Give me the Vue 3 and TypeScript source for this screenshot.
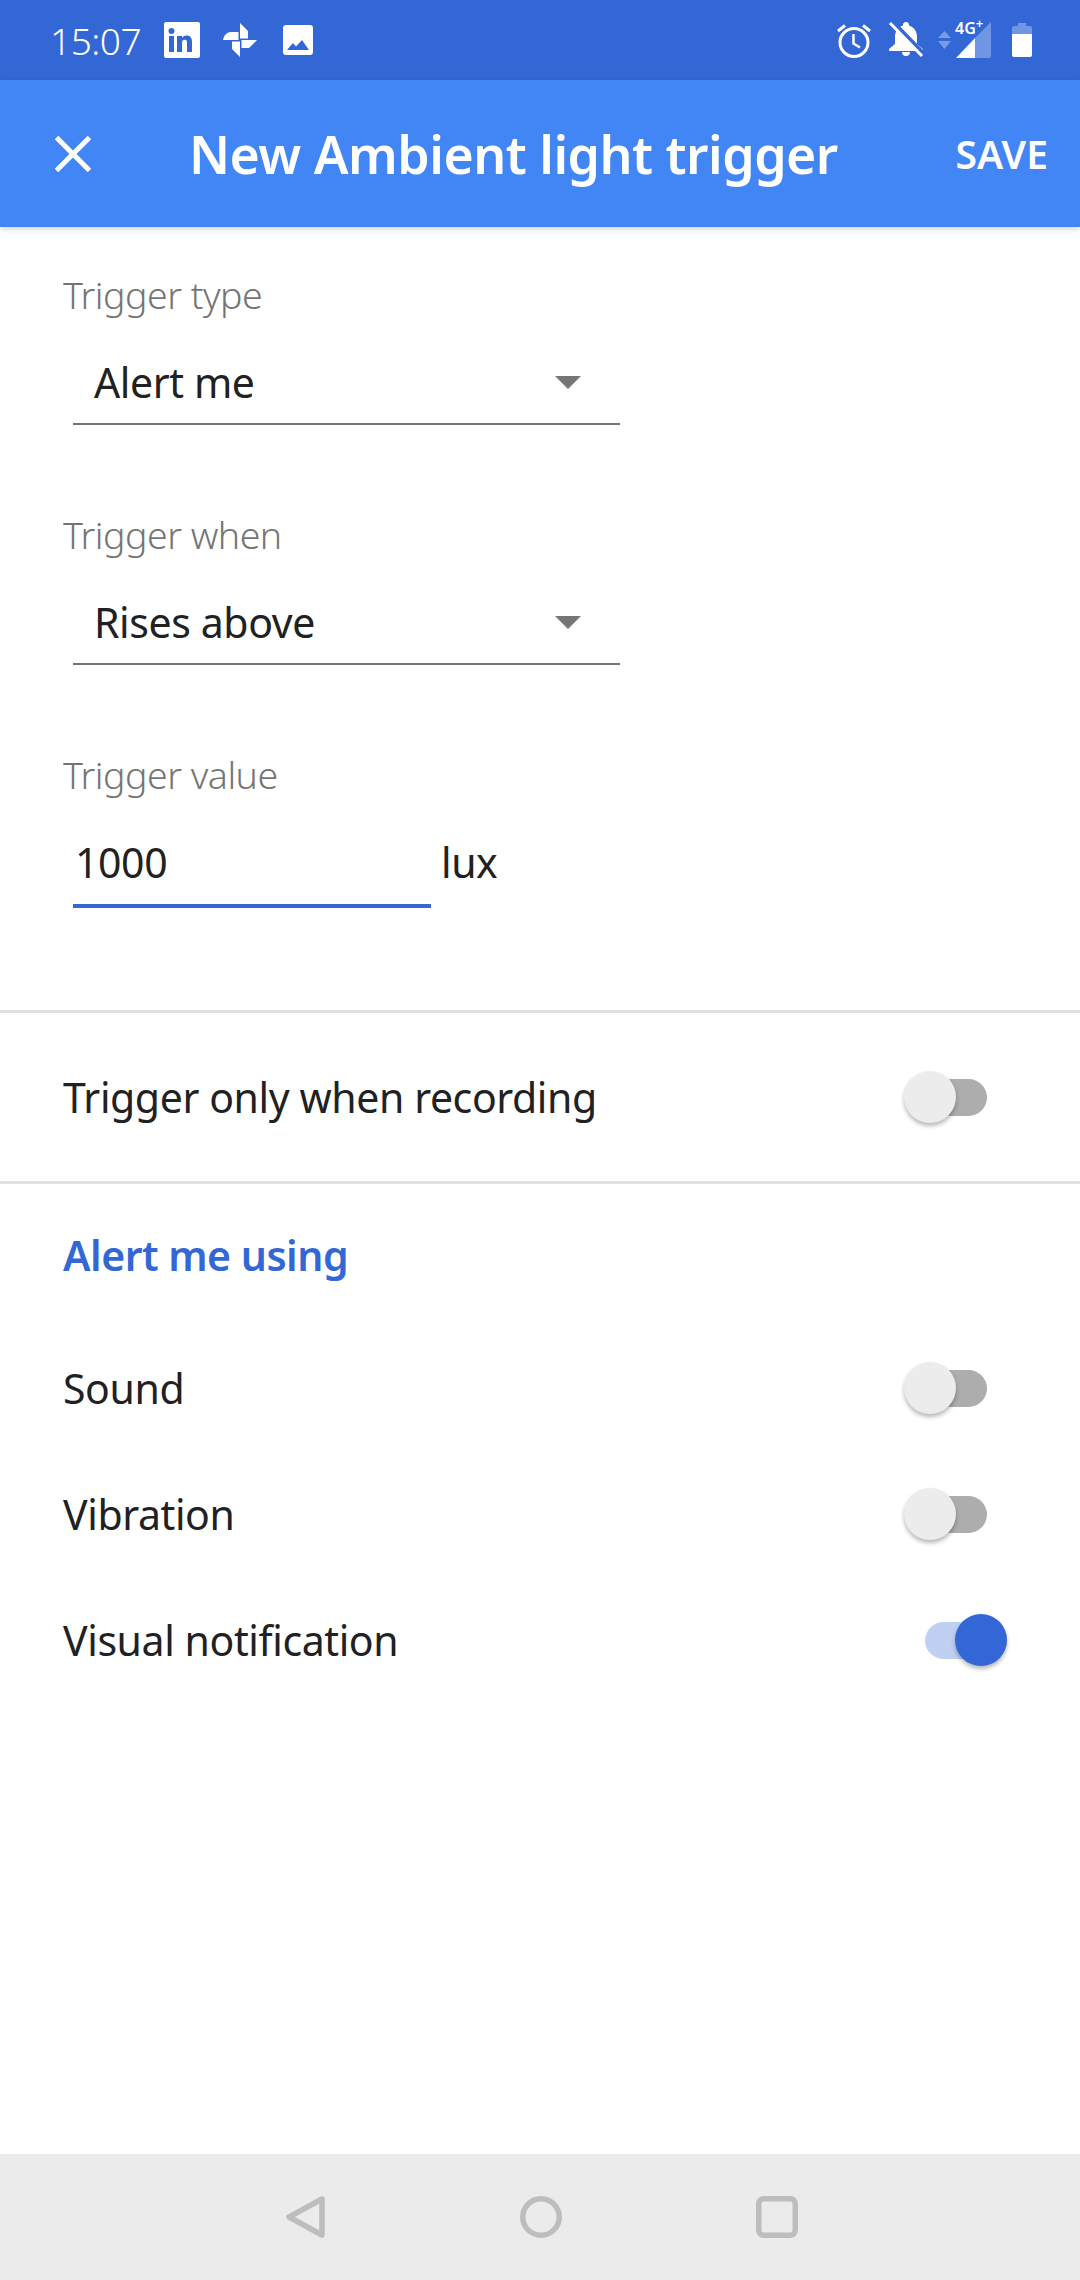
<script setup lang="ts">
import { ref } from 'vue';

const triggerOnlyRecording = ref(false);

const alertRows = ref([
  { label: 'Sound', on: false },
  { label: 'Vibration', on: false },
  { label: 'Visual notification', on: true },
]);

const selects = [
  { label: 'Trigger type', value: 'Alert me' },
  { label: 'Trigger when', value: 'Rises above' },
];
</script>

<template>
  <div class="screen">
    <div class="status-bar">
      <span class="clock">15:07</span>
      <svg class="linkedin" width="36" height="36" viewBox="0 0 36 36">
        <path fill="#fff" fill-rule="evenodd" d="M2 0h32a2 2 0 0 1 2 2v32a2 2 0 0 1-2 2H2a2 2 0 0 1-2-2V2a2 2 0 0 1 2-2zM5 14v16h5V14zM7.500 6a3 3 0 1 0 0 6 3 3 0 0 0 0-6zM13 14v16h5v-9c0-2 1-3.200 2.800-3.200S23 19 23 21v9h5V20c0-4.500-2.200-6.400-5.500-6.400-2.200 0-3.700 1-4.500 2.300V14z" />
      </svg>
      <svg class="pinwheel" width="34" height="34" viewBox="0 0 34 34">
        <path fill="#fff" d="M17 0l8 8v7.500h-8zM34 17l-8 8h-7.500v-8zM17 34l-8-8v-7.500h8zM0 17c1-5 4-8 8-8h7.500v8z" />
      </svg>
      <svg class="picture" width="30" height="30" viewBox="0 0 30 30">
        <path fill="#fff" fill-rule="evenodd" d="M3 0h24a3 3 0 0 1 3 3v24a3 3 0 0 1-3 3H3a3 3 0 0 1-3-3V3a3 3 0 0 1 3-3zM4 25l6-7 3 3.500L19 15l7 10z" />
      </svg>
      <span class="status-spacer"></span>
      <svg class="alarm" width="34" height="36" viewBox="0 0 34 36">
        <circle cx="17" cy="20.500" r="14" fill="none" stroke="#fff" stroke-width="3" />
        <path d="M16.500 12v9.500l6.500 4" fill="none" stroke="#fff" stroke-width="2.500" />
        <path d="M1 9l7-5.500M33 9l-7-5.500" fill="none" stroke="#fff" stroke-width="3" />
      </svg>
      <svg class="bell" width="36" height="36" viewBox="0 0 36 36">
        <path fill="#fff" d="M18 0a3 3 0 0 1 3 3.500c5 1.500 8 6 8 11.500v7l6 5v2H1v-2l6-5v-7c0-5.500 3-10 8-11.500a3 3 0 0 1 3-3.500zM14 30h8a4 4 0 0 1-8 0z" />
        <path d="M5 0l32 33" stroke="#3367d6" stroke-width="4" />
        <path d="M2 1l32 33" stroke="#fff" stroke-width="3" />
      </svg>
      <svg class="data-arrows" width="13" height="18" viewBox="0 0 13 18">
        <path fill="#fff" opacity="0.35" d="M6.500 0L13 7H0zM0 10h13l-6.500 8z" />
      </svg>
      <div class="signal">
        <svg width="36" height="36" viewBox="0 0 36 36">
          <path fill="#fff" opacity="0.3" d="M35 0v34a2 2 0 0 1-2 2H19V16z" />
          <path fill="#fff" d="M19 16v20H0z" />
        </svg>
        <span class="network">4G<sup>+</sup></span>
      </div>
      <svg class="battery" width="20" height="34" viewBox="0 0 20 34">
        <path fill="#fff" opacity="0.3" d="M6 0h8v3h4a2 2 0 0 1 2 2v6H0V5a2 2 0 0 1 2-2h4z" />
        <path fill="#fff" d="M0 11h20v21a2 2 0 0 1-2 2H2a2 2 0 0 1-2-2z" />
      </svg>
    </div>

    <header class="app-bar">
      <svg class="close" width="36" height="36" viewBox="0 0 36 36">
        <path d="M1.500 1.500l33 33M34.500 1.500l-33 33" stroke="#fff" stroke-width="5" />
      </svg>
      <h1 class="title">New Ambient light trigger</h1>
      <span class="save">SAVE</span>
    </header>

    <section class="form">
      <div v-for="item in selects" :key="item.label" class="field">
        <div class="field-label">{{ item.label }}</div>
        <div class="select">
          <span class="select-value">{{ item.value }}</span>
          <span class="caret"></span>
        </div>
      </div>
      <div class="field">
        <div class="field-label">Trigger value</div>
        <div class="value-row">
          <div class="value-input">1000</div>
          <span class="unit">lux</span>
        </div>
      </div>
    </section>

    <div class="row recording-row">
      <span>Trigger only when recording</span>
      <div class="switch" :class="{ on: triggerOnlyRecording }">
        <span class="thumb"></span>
      </div>
    </div>

    <section class="alerts">
      <h2 class="alerts-title">Alert me using</h2>
      <div v-for="row in alertRows" :key="row.label" class="row">
        <span>{{ row.label }}</span>
        <div class="switch" :class="{ on: row.on }">
          <span class="thumb"></span>
        </div>
      </div>
    </section>

    <nav class="nav-bar">
      <svg width="40" height="42" viewBox="0 0 40 42">
        <path d="M36 3L3 21l33 18z" fill="none" stroke="#bdbdbd" stroke-width="5.500" stroke-linejoin="round" />
      </svg>
      <svg width="42" height="42" viewBox="0 0 42 42">
        <circle cx="21" cy="21" r="18.250" fill="none" stroke="#bdbdbd" stroke-width="5.500" />
      </svg>
      <svg width="42" height="42" viewBox="0 0 42 42">
        <rect x="2.750" y="2.750" width="36.500" height="36.500" rx="5" fill="none" stroke="#bdbdbd" stroke-width="5.500" />
      </svg>
    </nav>
  </div>
</template>

<style>
html,
body {
  margin: 0;
  background: #fff;
}
</style>

<style scoped>
.screen {
  display: flex;
  flex-direction: column;
  width: 1080px;
  height: 2280px;
  overflow: hidden;
  background: #fff;
  font-family: "Noto Sans", "Open Sans", sans-serif;
  color: #212121;
}

.status-bar {
  display: flex;
  align-items: center;
  flex: none;
  height: 80px;
  padding: 0 48px 0 50px;
  box-sizing: border-box;
  background: #3367d6;
  color: #fff;
}

.clock {
  width: 114px;
  font-size: 37px;
  font-weight: 300;
  letter-spacing: -0.5px;
}

.linkedin {
  margin-right: 23px;
}

.pinwheel {
  margin-right: 26px;
}

.status-spacer {
  flex: 1;
}

.alarm {
  margin-right: 17px;
}

.bell {
  margin-right: 14px;
}

.data-arrows {
  margin-right: 5px;
}

.signal {
  position: relative;
  width: 36px;
  height: 36px;
  margin-right: 20px;
}

.signal svg {
  display: block;
}

.network {
  position: absolute;
  top: -4px;
  left: -1px;
  font-size: 16px;
  font-weight: 600;
  line-height: 20px;
  white-space: nowrap;
}

.network sup {
  font-size: 13px;
  line-height: 0;
}

.app-bar {
  position: relative;
  z-index: 1;
  display: flex;
  align-items: center;
  flex: none;
  height: 147px;
  padding: 0 32px 0 55px;
  box-sizing: border-box;
  background: #4285f4;
  color: #fff;
  box-shadow: 0 2px 6px rgba(0, 0, 0, 0.18);
}

.close {
  margin-right: 98px;
}

.title {
  flex: 1;
  margin: 0;
  font-size: 51.800px;
  font-weight: 600;
  letter-spacing: -0.5px;
  white-space: nowrap;
}

.save {
  font-size: 39px;
  font-weight: 600;
}

.form {
  flex: none;
  padding: 45px 0 0 63px;
  height: 786px;
  box-sizing: border-box;
  border-bottom: 3px solid #e0e0e0;
}

.field {
  margin-bottom: 87px;
}

.field-label {
  margin-bottom: 2px;
  font-size: 37.500px;
  font-weight: 300;
  line-height: 46px;
  color: #757575;
  letter-spacing: -0.5px;
}

.select {
  display: flex;
  align-items: center;
  justify-content: space-between;
  width: 547px;
  height: 105px;
  margin-left: 10px;
  padding: 20px 39px 0 21px;
  box-sizing: border-box;
  border-bottom: 2px solid #757575;
}

.select-value,
.value-input,
.unit {
  font-size: 41px;
  letter-spacing: -0.4px;
}

.caret {
  width: 0;
  height: 0;
  margin-top: 2px;
  border-left: 13px solid transparent;
  border-right: 13px solid transparent;
  border-top: 13px solid #757575;
}

.value-row {
  display: flex;
  align-items: stretch;
  margin-left: 10px;
}

.value-input {
  display: flex;
  align-items: center;
  width: 358px;
  height: 108px;
  padding: 20px 0 0 2px;
  box-sizing: border-box;
  border-bottom: 4px solid #3367d6;
}

.unit {
  display: flex;
  align-items: center;
  height: 104px;
  padding-top: 20px;
  box-sizing: border-box;
  margin-left: 10px;
}

.row {
  display: flex;
  align-items: center;
  justify-content: space-between;
  height: 126px;
  padding: 0 93px 0 63px;
  font-size: 41px;
  letter-spacing: -0.4px;
}

.recording-row {
  flex: none;
  height: 171px;
  border-bottom: 3px solid #e0e0e0;
  box-sizing: border-box;
}

.alerts {
  flex: 1;
}

.alerts-title {
  margin: 0;
  height: 141px;
  padding: 49px 0 0 63px;
  box-sizing: border-box;
  font-size: 41px;
  font-weight: 600;
  line-height: 44px;
  letter-spacing: -0.5px;
  color: #3367d6;
}

.switch {
  position: relative;
  flex: none;
  width: 82px;
  height: 37px;
  border-radius: 19px;
  background: #adadad;
}

.switch.on {
  left: 20px;
  background: #bfd0f2;
}

.thumb {
  position: absolute;
  top: -8px;
  left: -1px;
  width: 52px;
  height: 52px;
  border-radius: 50%;
  background: #ececec;
  box-shadow: 0 3px 4px rgba(0, 0, 0, 0.28);
}

.switch.on .thumb {
  left: auto;
  right: 0;
  background: #3367d6;
}

.nav-bar {
  display: flex;
  align-items: center;
  justify-content: center;
  gap: 194px;
  flex: none;
  height: 126px;
  padding-left: 3px;
  background: #ebebeb;
}
</style>
